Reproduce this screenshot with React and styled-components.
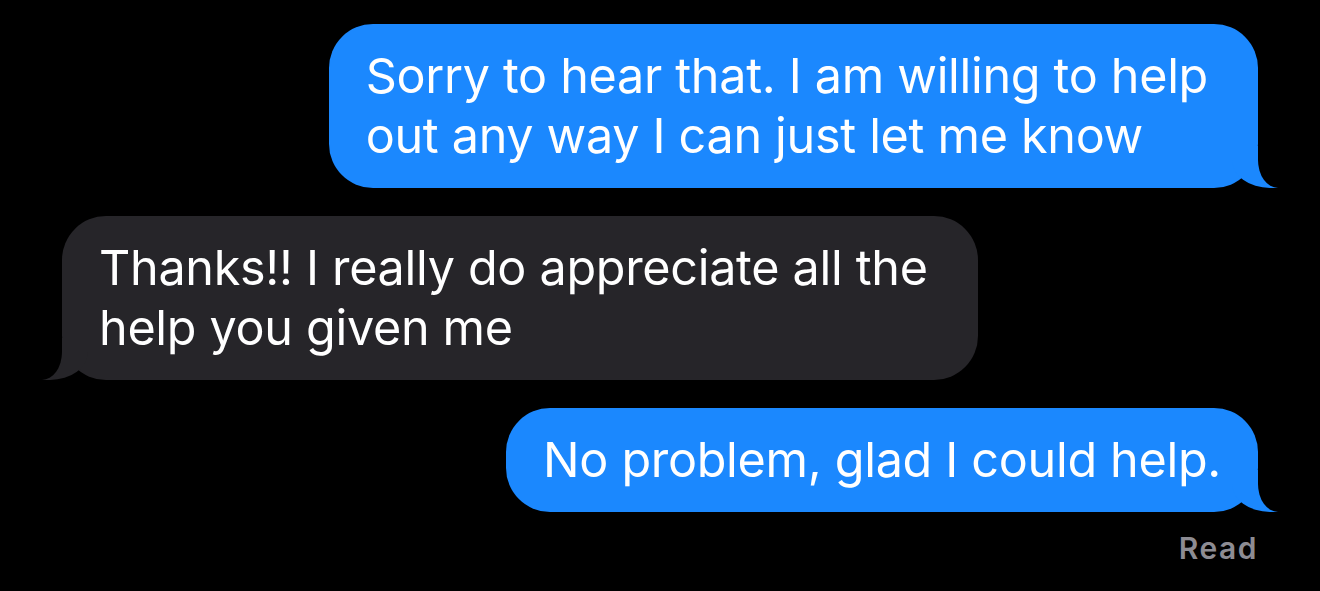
import React from 'react'
import styled, { createGlobalStyle } from 'styled-components'

const GlobalStyle = createGlobalStyle`
  html, body {
    margin: 0;
    padding: 0;
    background: #000;
  }
  body {
    font-family: Inter, "Noto Sans", "Liberation Sans", sans-serif;
    -webkit-font-smoothing: antialiased;
  }
`

const Thread = styled.div`
  width: 1320px;
  height: 591px;
  box-sizing: border-box;
  padding: 24px 62px 0;
  display: flex;
  flex-direction: column;
  gap: 28px;
  background: #000;
  overflow: hidden;
`

const Row = styled.div`
  display: flex;
  justify-content: ${({ $me }) => ($me ? 'flex-end' : 'flex-start')};
`

const Bubble = styled.div`
  position: relative;
  box-sizing: border-box;
  padding: 22px ${({ $multi }) => ($multi ? '50px' : '37px')} 22px 37px;
  border-radius: 44px;
  font-size: 48.5px;
  line-height: 60px;
  letter-spacing: -0.3px;
  color: #fff;
  background: ${({ $me }) => ($me ? '#1b88fe' : '#262529')};
  white-space: nowrap;

  &::before,
  &::after {
    content: '';
    position: absolute;
    bottom: 0;
    height: 42px;
  }

  &::before {
    width: 48px;
    background: ${({ $me }) => ($me ? '#1b88fe' : '#262529')};
    ${({ $me }) =>
      $me
        ? 'right: -22px; border-bottom-left-radius: 38px 28px;'
        : 'left: -22px; border-bottom-right-radius: 38px 28px;'}
  }

  &::after {
    width: 44px;
    background: #000;
    ${({ $me }) =>
      $me
        ? 'right: -44px; border-bottom-left-radius: 20px 28px;'
        : 'left: -44px; border-bottom-right-radius: 20px 28px;'}
  }
`

const Receipt = styled.div`
  margin-top: -10px;
  text-align: right;
  font-size: 30px;
  font-weight: 600;
  letter-spacing: 1.5px;
  color: #8d8c93;
`

const messages = [
  { me: true, lines: ['Sorry to hear that. I am willing to help', 'out any way I can just let me know'] },
  { me: false, lines: ['Thanks!! I really do appreciate all the', 'help you given me'] },
  { me: true, lines: ['No problem, glad I could help.'] },
]

const App = () => {
  return (
    <>
      <GlobalStyle />
      <Thread>
        {messages.map((m, i) => (
          <Row key={i} $me={m.me}>
            <Bubble $me={m.me} $multi={m.lines.length > 1}>
              {m.lines.map((l, j) => (
                <React.Fragment key={j}>
                  {j > 0 && <br />}
                  {l}
                </React.Fragment>
              ))}
            </Bubble>
          </Row>
        ))}
        <Receipt>Read</Receipt>
      </Thread>
    </>
  )
}

export default App
